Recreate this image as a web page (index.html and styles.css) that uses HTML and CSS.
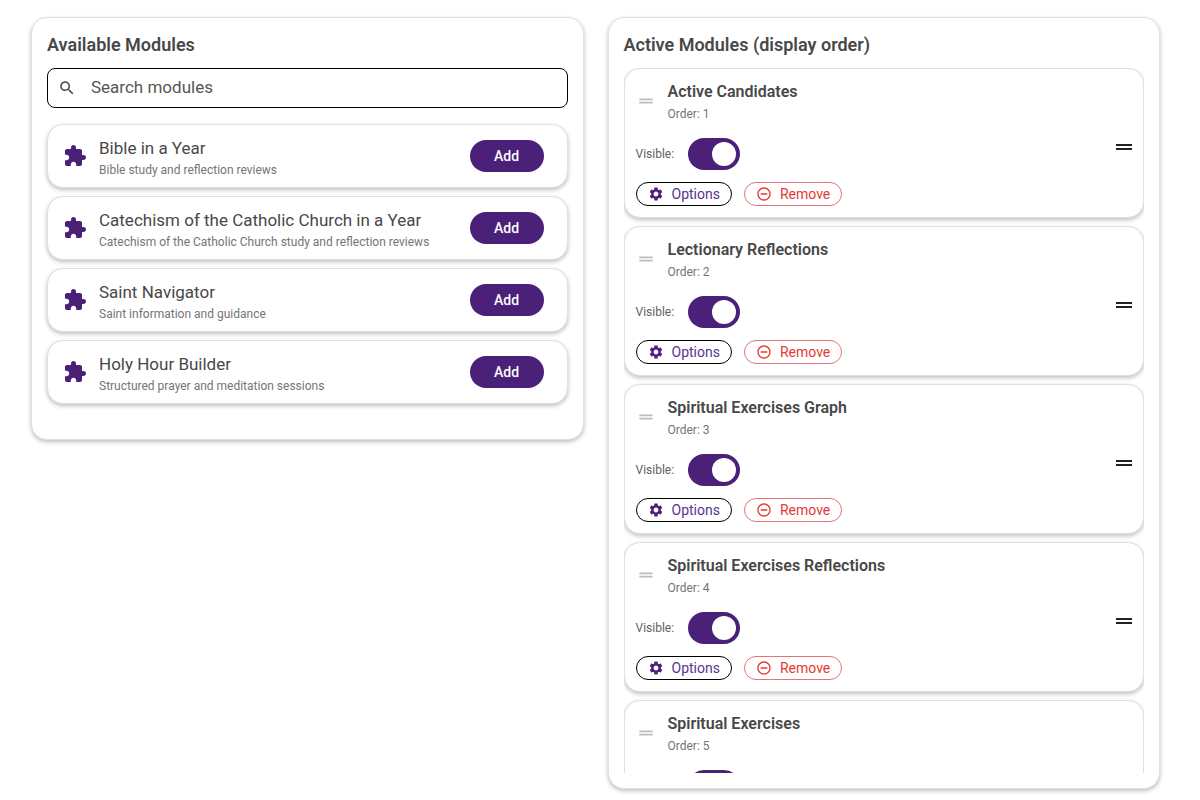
FILE: index.html
```html
<!DOCTYPE html>
<html lang="en">

<head>
    <meta charset="UTF-8" />
    <meta name="viewport" content="width=device-width, initial-scale=1.0" />
    <title>Modules</title>
    <link rel="stylesheet" href="styles.css">
</head>

<body>
    <!-- Shared icons -->
    <svg class="icon-defs" aria-hidden="true">
        <symbol id="puzzle" viewBox="0 0 24 24">
            <path d="M20.500 11H19V7c0-1.100-.9-2-2-2h-4V3.500C13 2.120 11.880 1 10.500 1S8 2.120 8 3.500V5H4c-1.100 0-1.990.9-1.990 2v3.800H3.500c1.490 0 2.700 1.210 2.700 2.700s-1.210 2.700-2.700 2.700H2V20c0 1.100.9 2 2 2h3.800v-1.500c0-1.490 1.210-2.700 2.700-2.700s2.700 1.210 2.700 2.700V22H17c1.100 0 2-.9 2-2v-4h1.500c1.380 0 2.500-1.120 2.500-2.500S21.880 11 20.500 11z" />
        </symbol>
        <symbol id="search" viewBox="0 0 24 24">
            <path d="M15.500 14h-.79l-.28-.27C15.410 12.590 16 11.110 16 9.500 16 5.910 13.090 3 9.500 3S3 5.910 3 9.500 5.910 16 9.500 16c1.610 0 3.090-.59 4.230-1.570l.27.28v.79l5 4.990L20.490 19l-4.990-5zm-6 0C7.010 14 5 11.990 5 9.500S7.010 5 9.500 5 14 7.010 14 9.500 11.990 14 9.500 14z" />
        </symbol>
        <symbol id="drag" viewBox="0 0 24 24">
            <path d="M20 9H4v2h16V9zM4 15h16v-2H4v2z" />
        </symbol>
        <symbol id="gear" viewBox="0 0 24 24">
            <path d="M19.140 12.940c.04-.3.060-.61.060-.94 0-.32-.02-.64-.07-.94l2.030-1.580c.18-.14.23-.41.12-.61l-1.920-3.320c-.12-.22-.37-.29-.59-.22l-2.390.96c-.5-.38-1.030-.7-1.620-.94L14.400 2.810c-.04-.24-.24-.41-.48-.41h-3.840c-.24 0-.43.17-.47.41L9.250 5.350c-.59.24-1.130.57-1.620.94L5.240 5.330c-.22-.08-.47 0-.59.22L2.740 8.870c-.12.21-.08.47.12.61l2.030 1.580c-.05.3-.09.63-.09.94s.02.64.07.94l-2.030 1.580c-.18.14-.23.41-.12.61l1.920 3.320c.12.22.37.29.59.22l2.390-.96c.5.38 1.030.7 1.620.94l.36 2.540c.05.24.24.41.48.41h3.840c.24 0 .44-.17.47-.41l.36-2.540c.59-.24 1.130-.56 1.620-.94l2.390.96c.22.08.47 0 .59-.22l1.920-3.320c.12-.22.07-.47-.12-.61l-2.010-1.580zM12 15.600c-1.980 0-3.600-1.620-3.600-3.600s1.620-3.600 3.600-3.600 3.600 1.620 3.600 3.600-1.620 3.600-3.600 3.600z" />
        </symbol>
        <symbol id="minus" viewBox="0 0 24 24">
            <path d="M7 11v2h10v-2H7zm5-9C6.480 2 2 6.480 2 12s4.480 10 10 10 10-4.480 10-10S17.520 2 12 2zm0 18c-4.410 0-8-3.590-8-8s3.590-8 8-8 8 3.590 8 8-3.590 8-8 8z" />
        </symbol>
    </svg>

    <section class="panel available">
        <h2>Available Modules</h2>
        <label class="search">
            <svg><use href="#search" /></svg>
            <input type="text" placeholder="Search modules" aria-label="Search modules">
        </label>
        <ul class="module-list">
            <li class="card module">
                <svg class="module-icon"><use href="#puzzle" /></svg>
                <div class="module-text">
                    <h3>Bible in a Year</h3>
                    <p>Bible study and reflection reviews</p>
                </div>
                <button class="add">Add</button>
            </li>
            <li class="card module">
                <svg class="module-icon"><use href="#puzzle" /></svg>
                <div class="module-text">
                    <h3>Catechism of the Catholic Church in a Year</h3>
                    <p>Catechism of the Catholic Church study and reflection reviews</p>
                </div>
                <button class="add">Add</button>
            </li>
            <li class="card module">
                <svg class="module-icon"><use href="#puzzle" /></svg>
                <div class="module-text">
                    <h3>Saint Navigator</h3>
                    <p>Saint information and guidance</p>
                </div>
                <button class="add">Add</button>
            </li>
            <li class="card module">
                <svg class="module-icon"><use href="#puzzle" /></svg>
                <div class="module-text">
                    <h3>Holy Hour Builder</h3>
                    <p>Structured prayer and meditation sessions</p>
                </div>
                <button class="add">Add</button>
            </li>
        </ul>
    </section>

    <section class="panel active">
        <h2>Active Modules (display order)</h2>
        <ul class="module-list" id="activeModules">
            <!-- Active modules -->
        </ul>
    </section>

    <script>
        const modules = [
            "Active Candidates",
            "Lectionary Reflections",
            "Spiritual Exercises Graph",
            "Spiritual Exercises Reflections",
            "Spiritual Exercises"
        ];

        document.getElementById("activeModules").innerHTML = modules.map((name, i) => `
            <li class="card active-module">
                <div class="active-body">
                    <div class="active-head">
                        <svg><use href="#drag" /></svg>
                        <div class="active-text">
                            <h3>${name}</h3>
                            <p>Order: ${i + 1}</p>
                        </div>
                    </div>
                    <div class="visible-row">
                        <label for="visible${i}">Visible:</label>
                        <input type="checkbox" class="switch" id="visible${i}" checked>
                    </div>
                    <div class="actions">
                        <button class="options"><svg><use href="#gear" /></svg>Options</button>
                        <button class="remove"><svg><use href="#minus" /></svg>Remove</button>
                    </div>
                </div>
                <svg class="handle"><use href="#drag" /></svg>
            </li>
        `).join("");
    </script>
</body>

</html>
```
FILE: styles.css
```css
* {
    box-sizing: border-box;
}

body {
    margin: 0;
    padding: 17px 40px 11px 31px;
    height: 100vh;
    overflow: hidden;
    display: flex;
    align-items: flex-start;
    gap: 24px;
    font-family: Roboto, sans-serif;
    background-color: #fff;
    color: #484848;
}

h2,
h3,
p,
ul {
    margin: 0;
    padding: 0;
}

ul {
    list-style: none;
}

svg {
    display: block;
    flex-shrink: 0;
    fill: currentColor;
}

button {
    font-family: inherit;
    cursor: pointer;
}

.icon-defs {
    display: none;
}

.panel,
.card {
    background-color: #fff;
    border: 1px solid #e0e0e0;
    border-radius: 16px;
    box-shadow: 0 2px 4px rgba(0, 0, 0, 0.25);
}

.panel {
    flex: 1;
    min-width: 0;
    padding: 15px;
}

.panel h2 {
    font-size: 18px;
    line-height: 24px;
    font-weight: 600;
    margin-bottom: 11px;
}

.available {
    padding-bottom: 35px;
}

.active {
    display: flex;
    flex-direction: column;
    max-height: 100%;
}

.module-list {
    display: flex;
    flex-direction: column;
    gap: 8px;
}

.active .module-list {
    flex: 1;
    min-height: 0;
    overflow-y: auto;
    scrollbar-width: none;
}

/* Search */
.search {
    display: flex;
    align-items: center;
    gap: 15px;
    height: 40px;
    padding: 0 10px;
    margin-bottom: 16px;
    border: 1px solid #000;
    border-radius: 8px;
}

.search svg {
    width: 18px;
    height: 18px;
}

.search input {
    flex: 1;
    min-width: 0;
    height: 100%;
    padding: 0 0 2px;
    border: 0;
    outline: 0;
    background: none;
    font-family: inherit;
    font-size: 17px;
    color: #484848;
}

.search input::placeholder {
    color: #565656;
    opacity: 1;
}

/* Available modules */
.module {
    display: flex;
    align-items: center;
    gap: 12px;
    height: 64px;
    padding: 0 23px 0 15px;
}

.module-icon {
    width: 24px;
    height: 24px;
    color: #4a2078;
}

.module-text {
    flex: 1;
    min-width: 0;
    padding-top: 4px;
}

.module-text h3 {
    font-size: 17px;
    line-height: 24px;
    font-weight: 400;
}

.module-text p,
.active-head p,
.visible-row {
    font-size: 12px;
    line-height: 20px;
    color: #757575;
}

.add {
    width: 74px;
    height: 32px;
    border: 0;
    border-radius: 16px;
    background-color: #4a2078;
    color: #fff;
    font-size: 14px;
    font-weight: 500;
}

/* Active modules */
.active-module {
    display: flex;
    flex-shrink: 0;
    align-items: center;
    justify-content: space-between;
    padding: 11px 7px 11px 11px;
}

.active-head {
    display: flex;
    align-items: center;
    gap: 12px;
    height: 42px;
}

.active-head svg {
    width: 20px;
    height: 20px;
    color: #bdbdbd;
}

.active-text {
    padding-top: 2px;
}

.active-head h3 {
    font-size: 16px;
    line-height: 24px;
    font-weight: 600;
}

.visible-row {
    display: flex;
    align-items: center;
    gap: 12px;
    margin: 16px 0 12px;
    color: #616161;
}

.switch {
    appearance: none;
    display: flex;
    align-items: center;
    width: 52px;
    height: 32px;
    margin: 0;
    padding: 4px;
    border-radius: 16px;
    background-color: #9e9e9e;
    cursor: pointer;
}

.visible-row label {
    min-width: 40px;
}

.switch::before {
    content: "";
    width: 24px;
    height: 24px;
    border-radius: 50%;
    background-color: #fff;
}

.switch:checked {
    justify-content: flex-end;
    background-color: #4a2078;
}

.actions {
    display: flex;
    gap: 12px;
}

.actions button {
    display: flex;
    align-items: center;
    gap: 8px;
    height: 24px;
    padding: 0 11px;
    border: 1px solid #000;
    border-radius: 12px;
    background: none;
    font-size: 14px;
}

.actions svg {
    width: 16px;
    height: 16px;
}

.actions .options {
    color: #5a3390;
}

.actions .options svg {
    color: #4a2078;
}

.actions .remove {
    border-color: #e57373;
    color: #e53935;
}

.handle {
    width: 24px;
    height: 24px;
    margin-top: 8px;
    color: #212121;
}

@media (max-width: 768px) {
    body {
        flex-direction: column;
        align-items: stretch;
        height: auto;
        overflow: auto;
    }
}
```
